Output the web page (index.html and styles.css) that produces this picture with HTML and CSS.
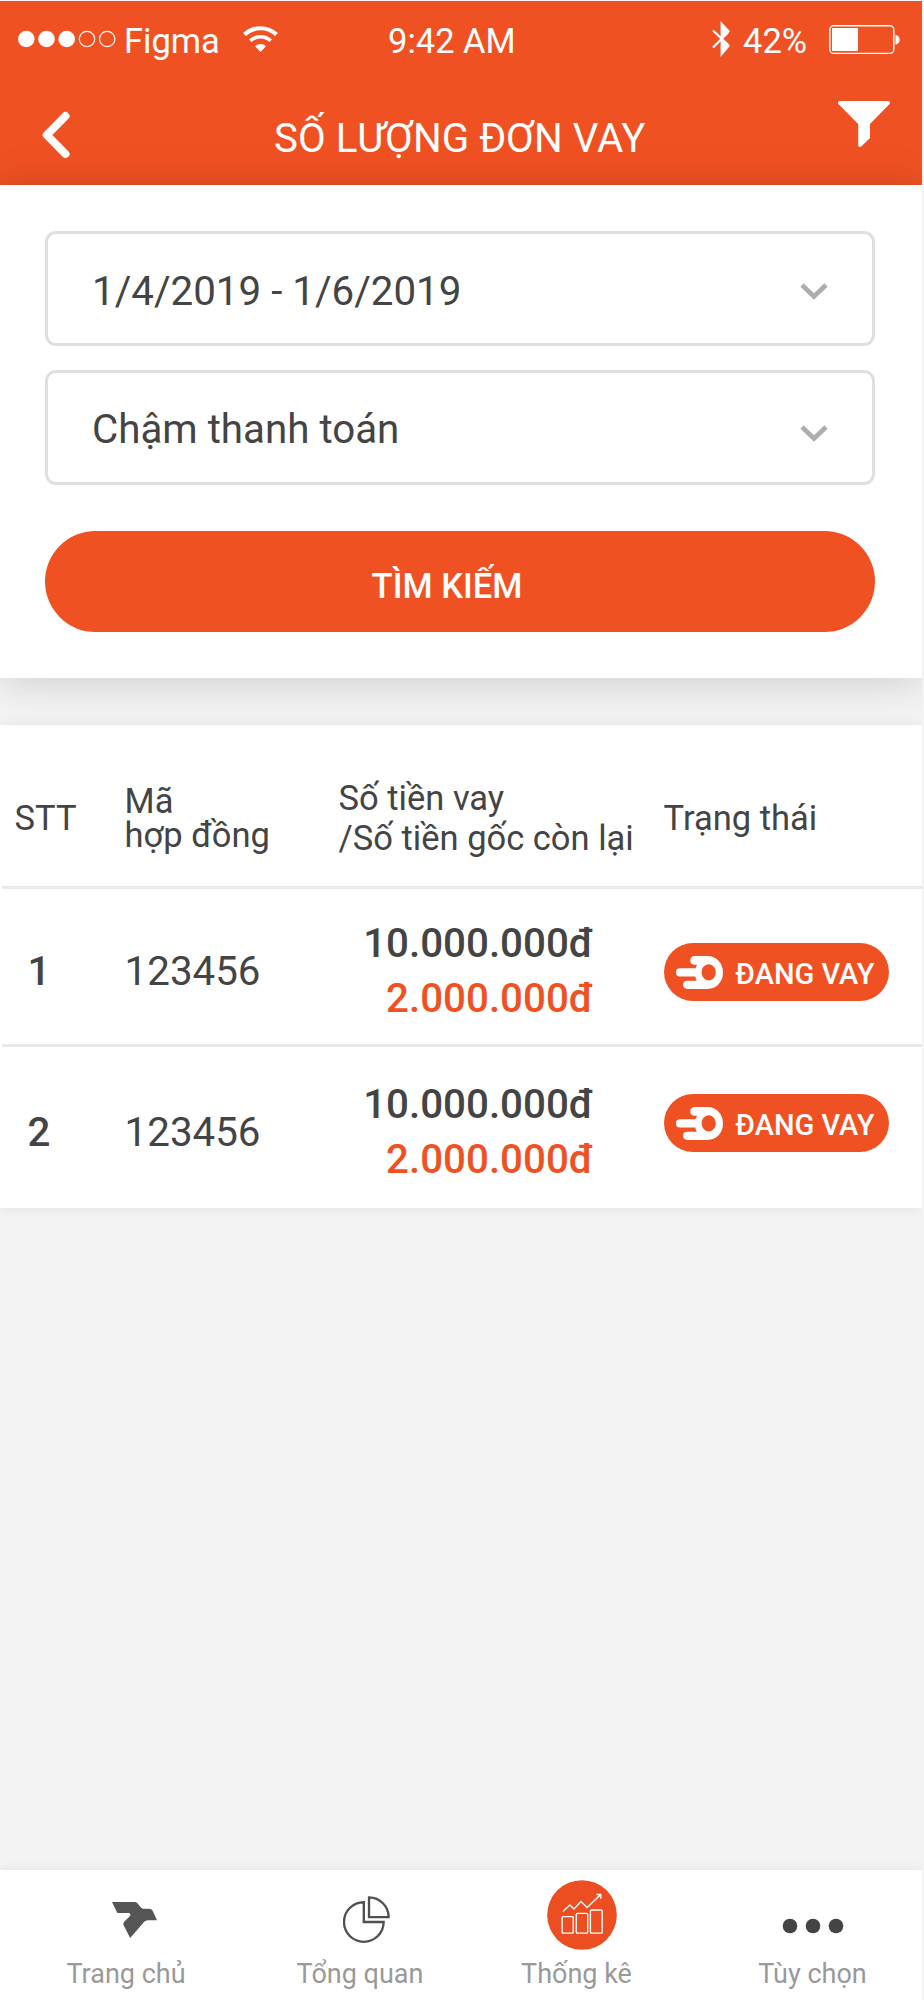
FILE: index.html
```html
<!DOCTYPE html>
<html lang="vi">
<head>
    <meta charset="UTF-8">
    <meta name="viewport" content="width=device-width, initial-scale=1.0">
    <title>Số lượng đơn vay</title>
    <link rel="stylesheet" href="styles.css">
</head>
<body>

    <svg class="symbols" width="0" height="0">
        <symbol id="chevron" viewBox="0 0 28 17">
            <path d="M2 2l12 11.5L26 2" fill="none" stroke="#adadad" stroke-width="4.6"/>
        </symbol>
        <symbol id="loan" viewBox="0 0 46.4 32.4">
            <path fill="#fff" fill-rule="evenodd" d="M18.3 0H31c9 0 15.4 7 15.4 16.2S40 32.4 31 32.4H11a4 4 0 0 1 0-8h9.500c-.8-1.300-1.200-2.600-1.400-4.200H4a4 4 0 0 1 0-8.100h15.300c.3-1.300.8-2.500 1.600-3.600h-2.600a4.200 4.200 0 0 1 0-8.500zM32.300 8c-3.900 0-7 3.600-7 8s3.100 8 7 8 7-3.600 7-8-3.100-8-7-8z"/>
        </symbol>
    </svg>

    <div class="header">
        <div class="status-bar">
            <svg class="signal" width="98" height="18" viewBox="0 0 98 18">
                <g fill="#fff"><circle cx="8.300" cy="9" r="8.300"/><circle cx="28.500" cy="9" r="8.300"/><circle cx="48.700" cy="9" r="8.300"/></g>
                <g fill="none" stroke="#fff" stroke-width="1.200"><circle cx="69" cy="9" r="7.700"/><circle cx="89.200" cy="9" r="7.700"/></g>
            </svg>
            <span class="carrier">Figma</span>
            <svg class="wifi" width="35" height="27" viewBox="0 0 35 27">
                <g fill="none" stroke="#fff" stroke-width="4">
                    <path d="M1.500 8.500a23.500 23.500 0 0 1 32 0"/>
                    <path d="M7.300 14.800a15 15 0 0 1 20.400 0" stroke-width="3.600"/>
                </g>
                <path d="M17.500 26l-5.400-5.800c3-2.900 7.800-2.900 10.800 0z" fill="#fff"/>
            </svg>
            <span class="time">9:42 AM</span>
            <svg class="bluetooth" width="18" height="36" viewBox="0 0 18 36">
                <path d="M1 9.500l15 14.200M1 26.500l15-15" fill="none" stroke="#fff" stroke-width="2.200"/>
                <path d="M8.600 0L18 10.300 10.500 17.500 18 24.800 8.600 36z" fill="#fff"/>
            </svg>
            <span class="percent">42%</span>
            <svg class="battery" width="71" height="30" viewBox="0 0 71 30">
                <rect x=".8" y=".8" width="64" height="27.600" rx="4" fill="none" stroke="#fff" stroke-width="1.400"/>
                <rect x="3" y="3" width="26" height="23" rx="1" fill="#fff"/>
                <path d="M66.500 9.800c5.500 1 5.500 9 0 10z" fill="#fff"/>
            </svg>
        </div>
        <div class="title-bar">
            <svg class="back" width="28" height="48" viewBox="0 0 28 48">
                <path d="M23.500 5L4.800 24l18.700 19" fill="none" stroke="#fff" stroke-width="8" stroke-linecap="round" stroke-linejoin="round"/>
            </svg>
            <h1>SỐ LƯỢNG ĐƠN VAY</h1>
            <svg class="filter" width="52" height="46" viewBox="0 0 52 46">
                <path d="M2 0h48c2 0 2.500 2 1.300 3.300L32 23v14L23.500 45.300c-1.500 1.200-3.300.7-3.300-1V23L.6 3.300C-.6 2 0 0 2 0z" fill="#fff"/>
            </svg>
        </div>
    </div>

    <div class="search-card">
        <div class="select">
            <span>1/4/2019 - 1/6/2019</span>
            <svg class="arrow" width="28" height="17"><use href="#chevron"/></svg>
        </div>
        <div class="select">
            <span class="name">Chậm thanh toán</span>
            <svg class="arrow low" width="28" height="17"><use href="#chevron"/></svg>
        </div>
        <button class="search-btn">TÌM KIẾM</button>
    </div>

    <div class="table">
        <div class="row head">
            <div class="index">STT</div>
            <div class="code">Mã<br>hợp đồng</div>
            <div class="money-title">Số tiền vay<br>/Số tiền gốc còn lại</div>
            <div class="state">Trạng thái</div>
        </div>
        <div class="row">
            <div class="index">1</div>
            <div class="code">123456</div>
            <div class="money">10.000.000đ<br><span class="left">2.000.000đ</span></div>
            <div class="state">
                <div class="pill"><svg width="47" height="33"><use href="#loan"/></svg><span>ĐANG VAY</span></div>
            </div>
        </div>
        <div class="row last">
            <div class="index">2</div>
            <div class="code">123456</div>
            <div class="money">10.000.000đ<br><span class="left">2.000.000đ</span></div>
            <div class="state">
                <div class="pill"><svg width="47" height="33"><use href="#loan"/></svg><span>ĐANG VAY</span></div>
            </div>
        </div>
    </div>

    <div class="nav">
        <div class="nav-item home">
            <div class="nav-icon">
                <svg width="45" height="36" viewBox="0 0 134 107">
                    <path d="M0 0h68q4 0 7 3l12 14q3 3 7 3h16q8 0 11 6l13 28h-27q-7 0-11 5L54 107 35 70q-3-6 2-12l16-16q5-5-2-9H16z" fill="#555"/>
                </svg>
            </div>
            <span>Trang chủ</span>
        </div>
        <div class="nav-item overview">
            <div class="nav-icon">
                <svg width="47" height="47" viewBox="0 0 140 140">
                    <g fill="none" stroke="#505050" stroke-width="7">
                        <path d="M62 18.500A59 59 0 1 0 121 77.500H62z"/>
                        <path d="M77.500 4A59 59 0 0 1 136 63H77.500z"/>
                    </g>
                </svg>
            </div>
            <span>Tổng quan</span>
        </div>
        <div class="nav-item stats">
            <div class="nav-icon">
                <svg width="70" height="70" viewBox="0 0 208 208">
                    <circle cx="104" cy="104" r="103.500" fill="#eb4e20"/>
                    <g fill="none" stroke="#fff" stroke-width="4">
                        <rect x="45" y="109" width="33" height="49" rx="3"/>
                        <rect x="87" y="99" width="34" height="59" rx="3"/>
                        <rect x="129" y="89" width="35" height="69" rx="3"/>
                        <path d="M47 94l21-20 12 12 21-22 18 18 40-38"/>
                        <path d="M147 43h13v13"/>
                    </g>
                </svg>
            </div>
            <span>Thống kê</span>
        </div>
        <div class="nav-item more">
            <div class="nav-icon">
                <svg width="62" height="16" viewBox="0 0 62 16">
                    <g fill="#444"><circle cx="8" cy="8" r="7.300"/><circle cx="31" cy="8" r="7.300"/><circle cx="54" cy="8" r="7.300"/></g>
                </svg>
            </div>
            <span>Tùy chọn</span>
        </div>
    </div>

</body>
</html>
```

FILE: styles.css
```css
* {
    box-sizing: border-box;
}
body {
    margin: 0;
    width: 922px;
    height: 2000px;
    padding-top: 1px;
    display: flex;
    flex-direction: column;
    font-family: Roboto, sans-serif;
    color: #444;
    background-color: #f3f3f3;
    overflow: hidden;
}
svg {
    display: block;
    flex-shrink: 0;
}
.symbols {
    position: absolute;
}

/* header */
.header {
    position: relative;
    height: 184px;
    background-color: #f05123;
    color: white;
    flex-shrink: 0;
}
.header::after {
    content: "";
    position: absolute;
    left: 922px;
    top: 184px;
    width: 2px;
    height: 12px;
    background-color: #f8b9a7;
}
.status-bar {
    height: 80px;
    display: flex;
    align-items: center;
    font-size: 34.5px;
    line-height: 40px;
}
.signal {
    margin: 0 0 4px 18px;
}
.carrier {
    width: 119px;
    margin-left: 8px;
}
.wifi {
    margin-bottom: 4px;
}
.time {
    width: 324px;
    margin-left: 110px;
}
.bluetooth {
    margin-bottom: 4px;
}
.percent {
    width: 86px;
    margin-left: 13px;
}
.battery {
    margin-bottom: 3px;
}
.title-bar {
    display: flex;
    align-items: flex-start;
    padding-left: 42px;
}
.back {
    margin-top: 30px;
}
.title-bar h1 {
    width: 564px;
    margin: 34px 0 0 204px;
    font-size: 40.3px;
    font-weight: 400;
    line-height: 48px;
}
.filter {
    margin-top: 20px;
}

/* search form */
.search-card {
    position: relative; /* its shadow also falls on the header */
    height: 493px;
    padding: 46px 47px 0 45px;
    background-color: white;
    box-shadow: 0 2px 40px rgba(0, 0, 0, 0.17);
    flex-shrink: 0;
}
.select {
    height: 115px;
    margin-bottom: 24px;
    padding: 5px 44px 0 44px;
    display: flex;
    align-items: center;
    justify-content: space-between;
    border: 3px solid #dfdfdf;
    border-radius: 11px;
    font-size: 40.3px;
}
.select .name {
    margin-top: -2px;
}
.arrow {
    margin-top: 1px;
}
.arrow.low {
    margin-top: 7px;
}
.search-btn {
    width: 100%;
    height: 101px;
    margin-top: 22px;
    padding: 8px 26px 0 0;
    border: none;
    border-radius: 51px;
    background-color: #f05123;
    color: white;
    font-family: inherit;
    font-size: 34.5px;
    font-weight: 500;
}

/* loans table */
.table {
    position: relative;
    height: 483px;
    margin-top: 47px;
    background-color: white;
    box-shadow: 0 0 12px rgba(0, 0, 0, 0.08);
    flex-shrink: 0;
}
.row {
    height: 158px;
    display: grid;
    grid-template-columns: 110px 214px 325px 1fr;
    align-items: center;
    margin-left: 2px;
    padding: 9px 0 0 12.6px;
    border-bottom: 3px solid #e9e9e9;
    font-size: 40.3px;
}
.row.head {
    height: 164px;
    padding-top: 25px;
    font-size: 34.5px;
}
.row.last {
    border-bottom: none;
    height: 161px;
}
.row .index {
    padding-left: 13px;
    font-weight: 500;
}
.head .index {
    padding-left: 0;
    font-weight: 400;
}
.head .code {
    line-height: 34.5px;
}
.money-title {
    line-height: 40.4px;
}
.money {
    width: 255px;
    padding-top: 1px;
    text-align: right;
    font-weight: 500;
    line-height: 54.7px;
}
.left {
    color: #f05123;
}
.pill {
    width: 225px;
    height: 58px;
    margin-top: 2px;
    padding-left: 12px;
    display: flex;
    align-items: center;
    gap: 13px;
    border-radius: 29px;
    background-color: #f05123;
    color: white;
    font-size: 29px;
    font-weight: 500;
}
.pill span {
    padding-top: 4px;
}
.last .pill {
    margin: 0 0 18px;
}

/* bottom navigation */
.nav {
    width: 924px;
    height: 130px;
    margin-top: auto;
    display: grid;
    grid-template-columns: 252px 216px 217px 239px;
    background-color: white;
    box-shadow: 0 0 10px rgba(0, 0, 0, 0.08);
    color: #999;
    font-size: 27px;
    flex-shrink: 0;
}
.nav-item {
    display: flex;
    flex-direction: column;
    align-items: center;
}
.nav-icon {
    height: 88px;
    display: flex;
    align-items: center;
}
.home .nav-icon {
    padding: 0 0 0 16px;
    height: 100px;
}
.home span {
    margin-top: -12px;
}
.overview .nav-icon {
    padding: 11px 0 0 12px;
}
.stats .nav-icon {
    padding: 1px 0 0 11px;
}
.more {
    padding-left: 16px;
}
.more .nav-icon {
    padding: 24px 0 0 1px;
}
```
